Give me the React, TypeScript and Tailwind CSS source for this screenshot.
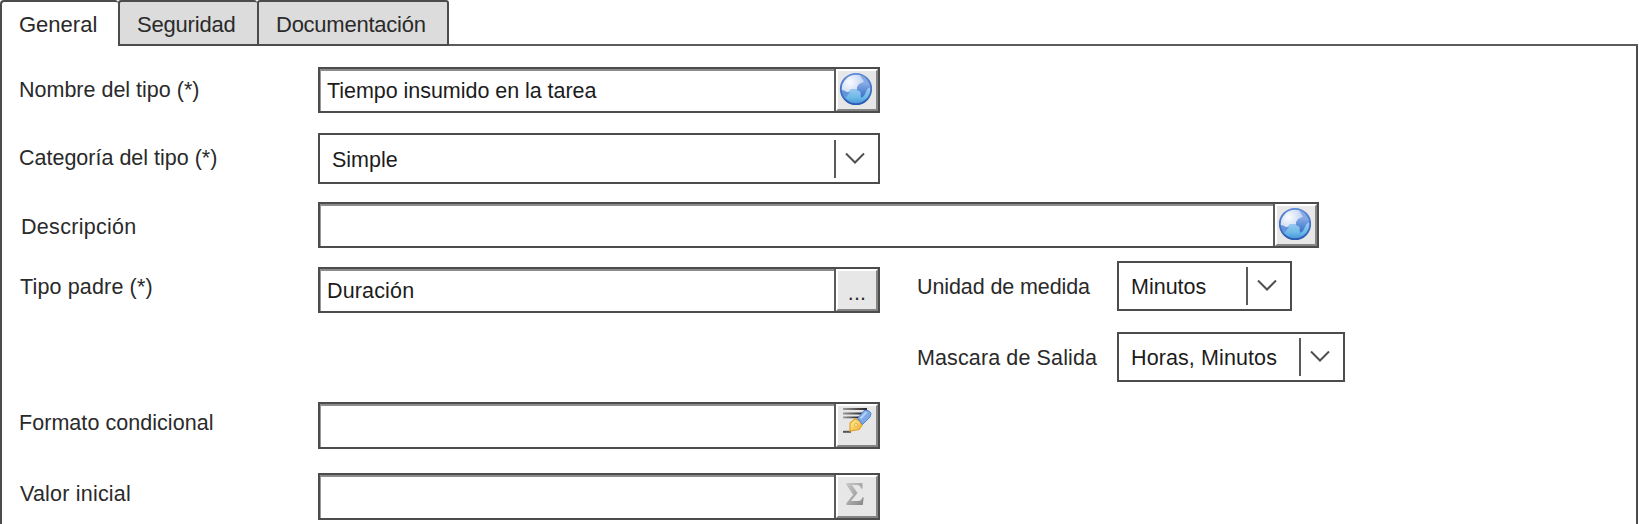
import React from "react";
import { clsx } from "clsx";

function Globe() {
  return (
    <svg width="34" height="34" viewBox="0 0 34 34">
      <defs>
        <radialGradient id="sea" cx="0.3" cy="0.28" r="0.9">
          <stop offset="0" stopColor="#fafcff" />
          <stop offset="0.4" stopColor="#cfdcf5" />
          <stop offset="0.8" stopColor="#a5c4ee" />
          <stop offset="1" stopColor="#5f96dc" />
        </radialGradient>
        <linearGradient id="land" x1="0" y1="0" x2="0" y2="1">
          <stop offset="0" stopColor="#8fb0e6" />
          <stop offset="0.6" stopColor="#5488d4" />
          <stop offset="1" stopColor="#3a70c4" />
        </linearGradient>
        <linearGradient id="deep" x1="0" y1="0" x2="0" y2="1">
          <stop offset="0" stopColor="#a4c8f0" />
          <stop offset="0.6" stopColor="#6dbbe9" />
          <stop offset="1" stopColor="#4a94d8" />
        </linearGradient>
        <linearGradient id="rim" x1="0" y1="0" x2="0" y2="1">
          <stop offset="0" stopColor="#5b8ad8" />
          <stop offset="1" stopColor="#2c5bb4" />
        </linearGradient>
      </defs>
      <circle cx="17" cy="17" r="15.4" fill="url(#sea)" />
      <path d="M3 20 L9 20 L12 17 L18 17 L21 20 L26 20 L32 15 C33 25 26 32 17 32 C9 32 3 27 3 20Z" fill="url(#deep)" />
      <path d="M2 18 L5 18.5 L8 20 L11 20.5 L9 22.5 L7 26 C4 24 2 21 2 18Z" fill="#6393da" />
      <path d="M18 15 L20 12 L24 10 L30 10 L31.5 15 L28.5 17 L27 20 L25 24 L22 26 L21.5 20 L18 18Z" fill="url(#land)" />
      <path d="M21 3.5 L25 5 L29 9 L30.5 13 L26 12 L24 8Z" fill="#86abe4" />
      <circle cx="17" cy="17" r="15.2" fill="none" stroke="url(#rim)" strokeWidth="1.8" />
    </svg>
  );
}

function FormatIcon() {
  return (
    <svg width="30" height="28" viewBox="0 0 30 28">
      <defs>
        <linearGradient id="ln" x1="0" y1="0" x2="1" y2="0">
          <stop offset="0" stopColor="#9a9a9a" />
          <stop offset="1" stopColor="#222222" />
        </linearGradient>
        <linearGradient id="nib" x1="0" y1="0" x2="1" y2="1">
          <stop offset="0" stopColor="#fff3a0" />
          <stop offset="1" stopColor="#f2ae25" />
        </linearGradient>
      </defs>
      <g fill="url(#ln)">
        <rect x="1" y="1" width="24" height="2" />
        <rect x="1" y="5.5" width="20" height="2" />
        <rect x="1" y="9.5" width="16" height="1.8" />
      </g>
      <path d="M1 24.8 H9" stroke="#555555" strokeWidth="2" />
      <path d="M8 24 L8 16 L13 12 L18 14 L20 18 L17 22.5Z" fill="url(#nib)" stroke="#e3a02a" strokeWidth="1.2" />
      <circle cx="14" cy="18" r="1.5" fill="#fff8c8" stroke="#e0a030" strokeWidth="0.8" />
      <path d="M15.5 11.5 L22 3.5 Q27 2.5 29 6.5 L28 10 L20.5 17.5Z" fill="#7ea9e6" stroke="#4f82ca" strokeWidth="1" />
      <path d="M18.5 11.5 L24.5 5" stroke="#b4d2f6" strokeWidth="2" />
    </svg>
  );
}

function SigmaIcon() {
  return (
    <svg width="20" height="24" viewBox="0 0 20 24">
      <defs>
        <linearGradient id="sg" x1="0" y1="0" x2="1" y2="1">
          <stop offset="0" stopColor="#c8c8c8" />
          <stop offset="1" stopColor="#888888" />
        </linearGradient>
      </defs>
      <path d="M1.5 1 H17.5 V6.5 H16 Q15.5 3 12 3 H7 L12.5 11 L6 19 H13 Q16.5 19 17.2 15.5 H18.7 L17.8 23 H1.5 V21 L8.2 12.8 L1.5 3Z" fill="url(#sg)" />
    </svg>
  );
}

function SideButton({ children, className }: { children: React.ReactNode; className?: string }) {
  return (
    <button
      className={clsx(
        "flex w-[42px] shrink-0 justify-center border-2 border-t-white border-r-[#858585] border-b-[#858585] border-l-white bg-[#e7e7e7]",
        className,
      )}
    >
      {children}
    </button>
  );
}

function Field({ value, button, className }: { value?: string; button: React.ReactNode; className: string }) {
  return (
    <div className={clsx("flex shrink-0 border-2 border-[#4c4c4c]", className)}>
      <div className="flex flex-1 items-center border-t-2 border-l border-t-[#8d8d8d] border-l-[#9a9a9a] pl-[6px] text-[#1c1c1c]">
        {value}
      </div>
      <div className="w-[2px] bg-[#5a5a5a]" />
      {button}
    </div>
  );
}

function Select({ value, className }: { value: string; className: string }) {
  return (
    <div className={clsx("flex shrink-0 items-center border-2 border-[#4c4c4c] text-[#1c1c1c]", className)}>
      <span className="flex-1 pt-[2px] pl-3">{value}</span>
      <div className="h-[38px] w-[2px] bg-[#5a5a5a]" />
      <svg className="mr-[13px] ml-[9px]" width="20" height="14" viewBox="0 0 20 14">
        <path d="M1 1.5 L10 10.5 L19 1.5" fill="none" stroke="#505050" strokeWidth="2" />
      </svg>
    </div>
  );
}

function Label({ text, className }: { text: string; className: string }) {
  return <label className={clsx("shrink-0 leading-6", className)}>{text}</label>;
}

export default function App() {
  return (
    <div className="flex h-[524px] w-[1639px] flex-col overflow-hidden bg-white font-['Liberation_Sans',Arial,sans-serif] text-[21.5px] leading-6 whitespace-nowrap text-[#2a2a2a]">
      <div className="flex h-[46px] shrink-0 text-[22px]">
        <div className="w-[118px] rounded-tl-[4px] rounded-tr-[3px] border-t-2 border-l-2 border-[#4c4c4c] pt-[11px] pl-[17px]">General</div>
        <div className="w-[139px] rounded-t-[3px] border-t-2 border-b-2 border-l-2 border-[#4c4c4c] bg-[#dcdcdc] pt-[11px] pl-[17px] tracking-[-0.2px]">Seguridad</div>
        <div className="w-[192px] rounded-t-[3px] border-2 border-[#4c4c4c] bg-[#dcdcdc] pt-[11px] pl-[17px] tracking-[-0.25px]">Documentación</div>
        <div className="mr-px flex-1 border-b-2 border-[#5c5c5c]" />
      </div>
      <div className="mr-px flex flex-1 flex-col border-x-2 border-[#4c4c4c] pt-[21px] pl-4">
        <div className="flex h-[66px] shrink-0">
          <Label text="Nombre del tipo (*)" className="w-[300px] pt-[11px] pl-px" />
          <Field value="Tiempo insumido en la tarea" className="h-[46px] w-[562px] tracking-[-0.04px]" button={<SideButton className="pt-px pr-0.5"><Globe /></SideButton>} />
        </div>
        <div className="flex h-[69px] shrink-0">
          <Label text="Categoría del tipo (*)" className="w-[300px] pt-[13px] pl-px" />
          <Select value="Simple" className="h-[51px] w-[562px]" />
        </div>
        <div className="flex h-[59px] shrink-0">
          <Label text="Descripción" className="w-[300px] pt-[13px] pl-[3px] tracking-[0.3px]" />
          <Field className="h-[46px] w-[1001px]" button={<SideButton className="pt-px pr-0.5"><Globe /></SideButton>} />
        </div>
        <div className="flex h-[71px] shrink-0">
          <Label text="Tipo padre (*)" className="w-[300px] pt-[14px] pl-[2px] tracking-[0.15px]" />
          <Field value="Duración" className="mt-1.5 h-[46px] w-[562px] tracking-[0.15px]" button={<SideButton className="items-end pb-1">...</SideButton>} />
          <Label text="Unidad de medida" className="ml-9 w-[201px] pt-[14px] pl-px tracking-[-0.1px]" />
          <Select value="Minutos" className="h-[50px] w-[175px]" />
        </div>
        <div className="flex h-[70px] shrink-0 pl-[898px]">
          <Label text="Mascara de Salida" className="w-[201px] pt-[14px] pl-px tracking-[0.12px]" />
          <Select value="Horas, Minutos" className="h-[50px] w-[228px] tracking-[0.1px]" />
        </div>
        <div className="flex h-[71px] shrink-0">
          <Label text="Formato condicional" className="w-[300px] pt-[9px] pl-px tracking-[0.05px]" />
          <Field className="h-[47px] w-[562px]" button={<SideButton className="pt-px"><FormatIcon /></SideButton>} />
        </div>
        <div className="flex shrink-0">
          <Label text="Valor inicial" className="w-[300px] pt-[9px] pl-[2px] tracking-[0.2px]" />
          <Field className="h-[47px] w-[562px]" button={<SideButton className="pt-[5px] pr-1"><SigmaIcon /></SideButton>} />
        </div>
      </div>
    </div>
  );
}
